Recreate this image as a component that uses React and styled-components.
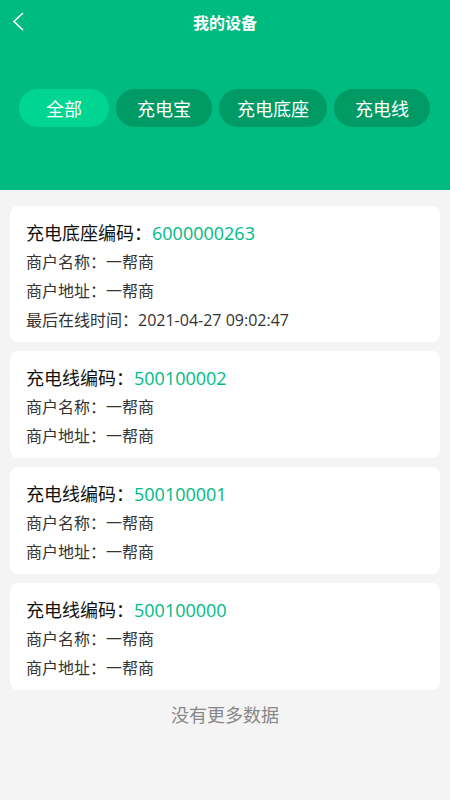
import React from 'react';
import styled, { createGlobalStyle } from 'styled-components';

const GlobalStyle = createGlobalStyle`
    * { box-sizing: border-box; }
    body {
        margin: 0;
        background: #f4f4f4;
        font-family: "Open Sans", "Noto Sans CJK SC", sans-serif;
    }
`;

const Page = styled.div`
    min-height: 800px;
    background: #f4f4f4;
`;

const Header = styled.div`
    height: 190px;
    background: #00bb80;
`;

const NavBar = styled.div`
    position: relative;
    height: 44px;
    display: flex;
    align-items: center;
    justify-content: center;
`;

const BackButton = styled.div`
    position: absolute;
    left: 12px;
    top: 10px;
    width: 16px;
    height: 22px;
    display: flex;
    align-items: center;
`;

const Title = styled.h1`
    margin: 0;
    font-size: 16px;
    font-weight: 700;
    color: #fff;
`;

const Tabs = styled.div`
    display: flex;
    gap: 7px;
    padding: 45px 0 0 19px;
`;

const Tab = styled.div`
    width: ${p => p.$width}px;
    height: 38px;
    border-radius: 19px;
    background: ${p => (p.$active ? '#00d691' : '#009a64')};
    color: #fff;
    font-size: 18px;
    display: flex;
    align-items: center;
    justify-content: center;
`;

const List = styled.div`
    display: flex;
    flex-direction: column;
    gap: 9px;
    padding: 16px 10px 0;
`;

const Card = styled.div`
    background: #fff;
    border-radius: 8px;
    padding: 12px 16px 7px;
`;

const CardTitle = styled.div`
    font-size: 18px;
    line-height: 30px;
    color: #111;
`;

const Code = styled.span`
    color: #00ba82;
    font-size: 18px;
`;

const Row = styled.div`
    font-size: 16px;
    line-height: 29px;
    color: #333;
`;

const NoMore = styled.div`
    text-align: center;
    font-size: 18px;
    line-height: 50px;
    color: #888;
`;

const tabs = [
    { label: '全部', width: 90 },
    { label: '充电宝', width: 96 },
    { label: '充电底座', width: 108 },
    { label: '充电线', width: 96 },
];

const devices = [
    { kind: '充电底座', code: '6000000263', time: '2021-04-27 09:02:47' },
    { kind: '充电线', code: '500100002' },
    { kind: '充电线', code: '500100001' },
    { kind: '充电线', code: '500100000' },
];

export default function App() {
    return (
        <Page>
            <GlobalStyle />
            <Header>
                <NavBar>
                    <BackButton>
                        <svg width="12" height="19" viewBox="0 0 12 19">
                            <path d="M11 1 L2 9.5 L11 18" fill="none" stroke="#fff" strokeWidth="1.6" />
                        </svg>
                    </BackButton>
                    <Title>我的设备</Title>
                </NavBar>
                <Tabs>
                    {tabs.map((t, i) => (
                        <Tab key={t.label} $width={t.width} $active={i === 0}>{t.label}</Tab>
                    ))}
                </Tabs>
            </Header>
            <List>
                {devices.map(d => (
                    <Card key={d.code}>
                        <CardTitle>{d.kind}编码：<Code>{d.code}</Code></CardTitle>
                        <Row>商户名称：一帮商</Row>
                        <Row>商户地址：一帮商</Row>
                        {d.time && <Row>最后在线时间：{d.time}</Row>}
                    </Card>
                ))}
            </List>
            <NoMore>没有更多数据</NoMore>
        </Page>
    );
}
